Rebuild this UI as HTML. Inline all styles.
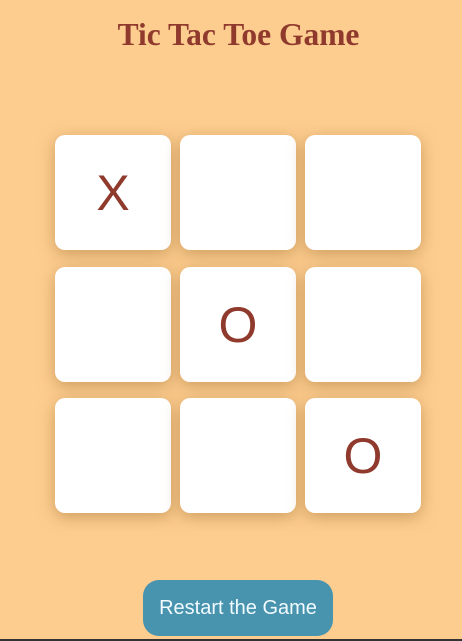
<!DOCTYPE html>
<html><head><style>
body{margin:0;width:462px;height:641px;background:#fdcd8f;position:relative;overflow:hidden;font-family:"Liberation Sans",sans-serif}
h1{position:absolute;top:17px;left:0;width:477px;margin:0;text-align:center;font:bold 31.5px "Liberation Serif",serif;color:#8f3a2d}
.c{position:absolute;width:116px;height:115px;background:#fff;border-radius:10px;box-shadow:0 4px 16px rgba(160,110,50,.5);display:flex;align-items:center;justify-content:center;font-size:50px;color:#8f3a2d}
.b{position:absolute;left:143px;top:580px;width:190px;height:56px;border-radius:16px;background:#4893ae;color:#f2fbff;font-size:20px;display:flex;align-items:center;justify-content:center}
.l{position:absolute;left:0;top:639px;width:462px;height:2px;background:#333}
</style></head><body>
<h1>Tic Tac Toe Game</h1>
<div class="c" style="left:55px;top:135px">X</div>
<div class="c" style="left:180px;top:135px"></div>
<div class="c" style="left:305px;top:135px"></div>
<div class="c" style="left:55px;top:267px"></div>
<div class="c" style="left:180px;top:267px">O</div>
<div class="c" style="left:305px;top:267px"></div>
<div class="c" style="left:55px;top:398px"></div>
<div class="c" style="left:180px;top:398px"></div>
<div class="c" style="left:305px;top:398px">O</div>
<div class="b">Restart the Game</div>
<div class="l"></div>
</body></html>
